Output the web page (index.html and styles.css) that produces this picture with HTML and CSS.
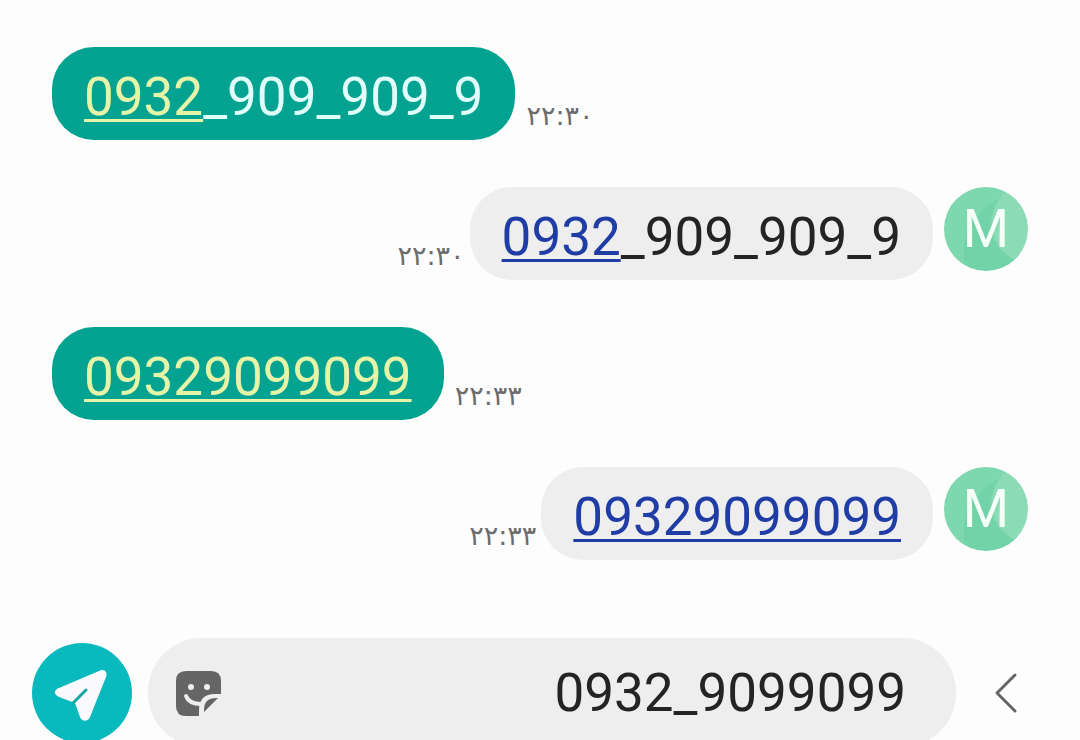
FILE: index.html
```html
<!DOCTYPE html>
<html lang="fa">
<head>
<meta charset="utf-8">
<title>Messages</title>
<link rel="stylesheet" href="styles.css">
</head>
<body>
<main class="chat">
  <section class="thread">
    <div class="message message-sent">
      <p class="bubble"><a class="phone" href="tel:0932">0932</a>_909_909_9</p>
      <time class="time">۲۲:۳۰</time>
    </div>
    <div class="message message-received">
      <time class="time">۲۲:۳۰</time>
      <p class="bubble"><a class="phone" href="tel:0932">0932</a>_909_909_9</p>
      <span class="avatar">M</span>
    </div>
    <div class="message message-sent">
      <p class="bubble"><a class="phone" href="tel:09329099099">09329099099</a></p>
      <time class="time">۲۲:۳۳</time>
    </div>
    <div class="message message-received">
      <time class="time">۲۲:۳۳</time>
      <p class="bubble"><a class="phone" href="tel:09329099099">09329099099</a></p>
      <span class="avatar">M</span>
    </div>
  </section>
  <form class="composer">
    <button class="send" type="button" aria-label="Send">
      <svg width="100" height="100" viewBox="0 0 100 100" aria-hidden="true">
        <path d="M27 45 67 28C72 25 76 29 74 34L58 74C56 79 50 79 48 74L43 60 27 54C21 51 22 47 27 45Z" fill="#fafafe"/>
        <path d="M41 60 54 47" stroke="#12a9a4" stroke-width="3" stroke-linecap="round"/>
      </svg>
    </button>
    <div class="field">
      <button class="sticker" type="button" aria-label="Stickers">
        <svg width="46" height="44" viewBox="0 0 46 44" overflow="visible" aria-hidden="true">
          <path d="M10 0H35Q45 0 45 10V23H39Q23 23 23 39V45H10Q0 45 0 35V10Q0 0 10 0Z" fill="#656565"/>
          <circle cx="15" cy="16" r="3" fill="#eee"/>
          <circle cx="31" cy="16" r="3" fill="#eee"/>
          <path d="M10 25Q13 33 25 33" fill="none" stroke="#eee" stroke-width="4" stroke-linecap="round"/>
          <path d="M28 39Q28 27 40 27H42L28 41Z" fill="#656565"/>
        </svg>
      </button>
      <input class="text" type="text" value="0932_9099099" aria-label="Message">
    </div>
    <button class="more" type="button" aria-label="More">
      <svg width="24" height="44" viewBox="0 0 24 44" aria-hidden="true">
        <path d="M21 4 3 22 21 40" fill="none" stroke="#656565" stroke-width="3" stroke-linecap="round" stroke-linejoin="round"/>
      </svg>
    </button>
  </form>
</main>
</body>
</html>
```
FILE: styles.css
```css
* {
  box-sizing: border-box;
}

body {
  margin: 0;
  background: #fdfdfd;
  color: #242424;
  font-family: Roboto, "DejaVu Sans", sans-serif;
}

.chat {
  display: flex;
  flex-direction: column;
  height: 100vh;
  overflow: hidden;
}

.thread {
  display: flex;
  flex: none;
  flex-direction: column;
  gap: 47px;
  padding: 47px 52px 78px;
}

.message {
  display: flex;
}

.message-received {
  justify-content: flex-end;
}

.bubble {
  margin: 0;
  padding: 19px 32px 12px;
  border-radius: 42px;
  font-size: 53px;
  line-height: 62px;
}

.message-sent .bubble {
  background: #03a291;
  color: #e0fffa;
}

.message-received .bubble {
  background: #eee;
}

.phone {
  text-decoration-thickness: 3px;
  text-underline-offset: 4px;
  text-decoration-skip-ink: none;
}

.message-sent .phone {
  color: #e5f4a6;
}

.message-received .phone {
  color: #203da5;
}

.time {
  align-self: flex-end;
  padding: 0 5px 8px;
  color: #6c6c6c;
  font-family: "DejaVu Sans", sans-serif;
  font-size: 27px;
  line-height: 32px;
}

.message-sent .time {
  padding-left: 11px;
}

.avatar {
  display: flex;
  align-items: center;
  justify-content: center;
  width: 84px;
  height: 84px;
  margin-left: 11px;
  border-radius: 50%;
  background:
    radial-gradient(circle at 88px 36px, #8bdbb5 0 40px, transparent 41px),
    radial-gradient(circle at 78px 66px, #73d3a8 0 58px, transparent 59px),
    #7ed8af;
  color: #f7fff9;
  font-size: 53px;
}

.composer {
  display: flex;
  flex: none;
  align-items: center;
  padding: 0 62px 0 32px;
}

.send,
.sticker,
.more {
  display: flex;
  flex: none;
  padding: 0;
  border: 0;
  background: none;
}

.send {
  overflow: hidden;
  border-radius: 50%;
  background: #08b9bd;
}

.field {
  display: flex;
  flex: 1;
  align-items: center;
  min-width: 0;
  height: 109px;
  margin: 0 38px 0 16px;
  padding: 0 50px 0 28px;
  border-radius: 54px;
  background: #eee;
}

.text {
  flex: 1;
  min-width: 0;
  padding: 0;
  border: 0;
  outline: 0;
  background: none;
  color: #242424;
  font-family: inherit;
  font-size: 53px;
  line-height: 62px;
  text-align: right;
}
```
